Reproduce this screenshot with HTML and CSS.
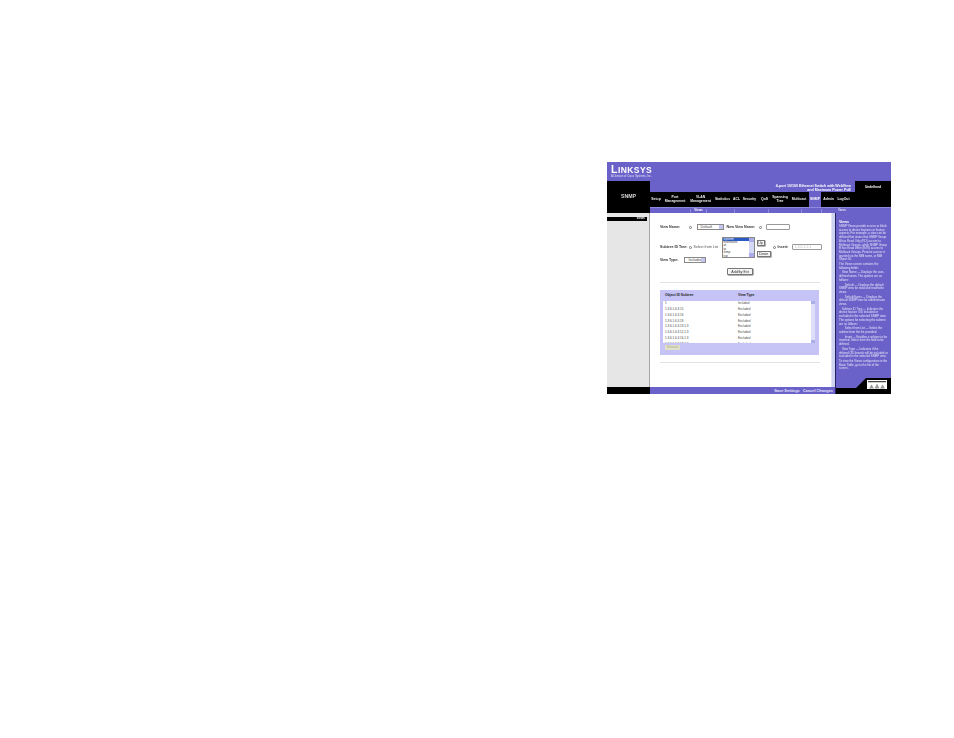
FILE: index.html
```html
<!DOCTYPE html>
<html lang="en">
<head>
<meta charset="utf-8">
<title>SNMP Views</title>
<link rel="stylesheet" href="styles.css">
</head>
<body>
<div class="frame">
  <div class="top">
    <div class="logo"><span class="logo-name">L<small>INKSYS</small></span><span class="logo-sub">A Division of Cisco Systems, Inc.</span></div>
  </div>
  <div class="head">
    <div class="brand">SNMP</div>
    <div class="title">4-port 10/100 Ethernet Switch with WebView<br>and Maximum Power PoE</div>
    <div class="status">Undefined</div>
    <nav class="nav">
      <span>Setup</span>
      <span>Port<br>Management</span>
      <span>VLAN<br>Management</span>
      <span>Statistics</span>
      <span>ACL</span>
      <span>Security</span>
      <span>QoS</span>
      <span>Spanning<br>Tree</span>
      <span>Multicast</span>
      <span class="on">SNMP</span>
      <span>Admin</span>
      <span>LogOut</span>
    </nav>
    <div class="subnav">
      <i></i><b>Views</b><i></i><i></i><i></i><i></i><i></i><em>Views</em>
    </div>
  </div>
  <div class="body">
    <aside class="side"><div class="side-item">Views</div></aside>
    <main class="main">
      <div class="scroll"></div>
      <div class="content">
        <div class="row-name">
          <label class="lbl">View Name:</label><span class="radio"></span>
          <span class="select w27">Default<i></i></span>
          <label class="lbl new">New View Name:</label><span class="radio"></span>
          <span class="input w24i"></span>
        </div>
        <div class="row-tree">
          <label class="lbl">Subtree ID Tree:</label><span class="radio"></span><span class="txt from">Select from List</span>
          <div class="list">
            <span class="sel">system</span><span>interfaces</span><span>at</span><span>ip</span><span>icmp</span><span>tcp</span><i></i>
          </div>
          <div class="updown"><span class="btn">Up</span><span class="btn">Down</span></div>
          <span class="radio r2"></span><label class="lbl ins">Insert:</label>
          <span class="input w29i">1.3.6.1.2.1</span>
        </div>
        <div class="row-type">
          <label class="lbl">View Type:</label>
          <span class="select w20">Included<i></i></span>
        </div>
        <div class="row-add"><span class="btn add">Add/by Ext</span></div>
        <hr class="rule">
        <section class="panel">
          <div class="thead"><b>Object ID Subtree</b><b>View Type</b></div>
          <div class="table">
            <div class="tr"><span>1</span><span>Included</span></div>
            <div class="tr"><span>1.3.6.1.6.3.15</span><span>Excluded</span></div>
            <div class="tr"><span>1.3.6.1.6.3.16</span><span>Excluded</span></div>
            <div class="tr"><span>1.3.6.1.6.3.18</span><span>Excluded</span></div>
            <div class="tr"><span>1.3.6.1.6.3.13.1.3</span><span>Excluded</span></div>
            <div class="tr"><span>1.3.6.1.6.3.12.1.3</span><span>Excluded</span></div>
            <div class="tr"><span>1.3.6.1.6.3.16.1.3</span><span>Excluded</span></div>
            <div class="tr"><span>1.3.6.1.6.3.18.1.3</span><span>Excluded</span></div>
            <div class="tscroll"></div>
          </div>
          <span class="remove">Remove</span>
        </section>
        <hr class="rule r-b">
      </div>
    </main>
    <aside class="help">
      <div class="help-text">
        <h4>Views</h4>
        <p>SNMP Views provide access or block access to device features or feature aspects. For example, a view can be defined that states that SNMP Group A has Read Only (RO) access to Multicast Groups, while SNMP Group B has Read Write (R/W) access to Multicast Groups. Feature access is granted via the MIB name, or MIB Object ID.</p>
        <p>The Views screen contains the following fields:</p>
        <p>&emsp;View Name — Displays the user-defined views. The options are as follows:</p>
        <p>&emsp;&emsp;Default — Displays the default SNMP view for read and read/write views.</p>
        <p>&emsp;&emsp;DefaultSuper — Displays the default SNMP view for administrator views.</p>
        <p>&emsp;Subtree ID Tree — Indicates the device feature OID included or excluded in the selected SNMP view. The options for selecting the subtree are as follows:</p>
        <p>&emsp;&emsp;Select from List — Select the subtree from the list provided.</p>
        <p>&emsp;&emsp;Insert — Enables a subtree to be inserted. Select from the field to be defined.</p>
        <p>&emsp;View Type — Indicates if the defined OID branch will be included or excluded in the selected SNMP view.</p>
        <p class="last">To view the Views configuration in the Basic Table, go to the list of the screen.</p>
      </div>
      <div class="cisco">
        <svg class="cisco-mark" viewBox="0 0 20 9" width="20" height="9" aria-hidden="true">
          <rect width="20" height="9" fill="#fff"/>
          <path d="M1 1h18v1.200H1z" fill="#444"/>
          <path d="M2 8.500 4.500 4.500 7 8.500zM7.500 8.500 10 3.500 12.500 8.500zM13 8.500 15.500 4.500 18 8.500z" fill="#9a9a9a"/>
        </svg>
      </div>
    </aside>
    <div class="foot-l"></div>
    <div class="foot"><span>Save Settings</span><span>Cancel Changes</span></div>
  </div>
</div>
</body>
</html>
```
FILE: styles.css
```css
* { box-sizing: border-box; }
html, body { margin: 0; padding: 0; background: #fff; }
body { width: 954px; height: 738px; padding: 162px 0 0 607px; font-family: "Liberation Sans", Arial, sans-serif; overflow: hidden; }
.frame { width: 284px; height: 232px; display: flex; flex-direction: column; font-size: 3.6px; line-height: 1.15; color: #222; filter: blur(.3px); }

.top { height: 19px; background: #6a62c8; padding: 3px 0 0 4px; }
.logo { display: flex; flex-direction: column; color: #fff; }
.logo-name { font-size: 10.500px; line-height: 9px; font-weight: 700; letter-spacing: .45px; }
.logo-name small { font-size: 8.500px; }
.logo-sub { font-size: 2.800px; line-height: 3px; color: #e2e0f8; }

.head { display: grid; grid-template-columns: 43px 205px 36px; grid-template-rows: 11px 15px 6px; }
.brand { grid-row: 1 / 4; background: #000; color: #d8d8d8; font-weight: 700; font-size: 5.200px; text-align: center; padding-top: 13px; }
.title { background: #6a62c8; color: #fff; font-weight: 700; font-size: 3.600px; line-height: 4.200px; text-align: right; padding: 2.500px 4px 0 0; white-space: nowrap; }
.status { grid-column: 3; grid-row: 1 / 3; background: #000; color: #fff; font-weight: 700; font-size: 3.300px; text-align: center; padding-top: 4.500px; }
.nav { background: #000; display: flex; align-items: center; color: #eee; font-weight: 700; font-size: 3.400px; text-align: center; line-height: 3.900px; }
.nav span { display: flex; align-items: center; justify-content: center; height: 100%; flex: none; }
.nav span:nth-child(1) { width: 12px; }
.nav span:nth-child(2) { width: 26px; }
.nav span:nth-child(3) { width: 25px; }
.nav span:nth-child(4) { width: 19px; }
.nav span:nth-child(5) { width: 9px; }
.nav span:nth-child(6) { width: 17px; }
.nav span:nth-child(7) { width: 13px; }
.nav span:nth-child(8) { width: 18px; }
.nav span:nth-child(9) { width: 20px; }
.nav span:nth-child(10) { width: 12px; }
.nav span:nth-child(11) { width: 15px; }
.nav span:nth-child(12) { width: 15px; }
.nav .on { background: #6a62c8; color: #fff; }
.subnav { grid-column: 2 / 4; background: #6a62c8; border-top: 1px solid #8f89dc; display: flex; align-items: center; color: #d9d7f7; font-size: 3px; padding-left: 40px; }
.subnav i { width: 1px; height: 4px; background: #8f89dc; flex: none; }
.subnav b { margin: 0 2px; width: 11px; flex: none; color: #fff; text-align: center; }
.subnav i:nth-child(4) { margin-left: 27px; }
.subnav i:nth-child(5) { margin-left: 33px; }
.subnav i:nth-child(6) { margin-left: 32px; }
.subnav i:nth-child(7) { margin-left: 19px; }
.subnav em { margin-left: 16px; font-style: normal; color: #fff; }

.body { display: grid; grid-template-columns: 43px 185px 56px; grid-template-rows: 174px 7px; }
.side { background: #e6e6e6; border-right: 1.500px solid #a4a4a4; padding-top: 4px; }
.side-item { background: #000; color: #fff; font-weight: 700; font-size: 3px; line-height: 3.500px; width: 40px; text-align: right; padding-right: 2px; }
.main { background: #fff; display: flex; flex-direction: row-reverse; }
.scroll { width: 4px; background: #cfd3f2; border-left: 1px solid #e3e5f7; flex: none; }
.content { flex: 1; padding: 0 0 0 10px; }

.lbl { font-weight: 700; color: #333; white-space: nowrap; }
.txt { color: #555; white-space: nowrap; }
.radio { width: 3px; height: 3px; border: .5px solid #777; border-radius: 50%; background: #fff; flex: none; }
.select { height: 5.500px; border: .5px solid #888; background: #fff; position: relative; padding-left: 3px; line-height: 4.500px; color: #444; flex: none; }
.select i { position: absolute; right: 0; top: 0; bottom: 0; width: 4px; background: #c3c7f0; }
.w27 { width: 27px; }
.w20 { width: 22px; }
.input { height: 6px; border: .5px solid #999; border-radius: 1px; background: #fff; color: #bbb; padding-left: 2px; line-height: 5px; flex: none; }
.w24i { width: 24px; }
.w29i { width: 30px; }

.row-name { display: flex; align-items: center; height: 6px; margin-top: 11px; }
.row-name .radio { margin: 0 5px 0 8.500px; }
.row-name .new { margin-left: 3px; }
.row-name .new + .radio { margin: 0 4px 0 4px; }
.row-tree { display: flex; align-items: center; height: 22px; margin-top: 6px; }
.from { margin-left: 2px; width: 24px; flex: none; }
.row-tree .radio { margin-left: 1px; }
.list { width: 33px; height: 21px; margin-left: 4px; border: .5px solid #888; background: #fff; position: relative; display: flex; flex-direction: column; color: #333; flex: none; font-size: 3.200px; line-height: 3.400px; overflow: hidden; }
.list span { padding-left: 1px; }
.list .sel { background: #2a5bc4; color: #fff; }
.list i { position: absolute; top: 0; right: 0; bottom: 0; width: 5px; background: #d5d8f5; border-top: 4px solid #a9aeea; border-bottom: 4px solid #a9aeea; }
.updown { width: 16px; height: 17px; margin: 3px 0 0 2px; display: flex; flex-direction: column; justify-content: space-between; align-items: flex-start; flex: none; }
.btn { height: 6px; border: .5px solid #777; background: #f4f4f4; padding: 0; line-height: 5px; color: #333; box-shadow: .5px .5px 0 #666; text-align: center; }
.updown .btn:first-child { width: 8px; }
.updown .btn:last-child { width: 14px; }
.row-tree .r2 { margin-left: 0; }
.ins { margin: 0 3px 0 2px; }
.row-type { display: flex; align-items: center; height: 6px; margin-top: -1px; }
.row-type .select { margin-left: 6px; }
.row-add { display: flex; justify-content: center; margin-top: 5px; width: 160px; height: 8px; }
.add { width: 26px; height: 7px; line-height: 6px; white-space: nowrap; border-radius: 1px; }

.rule { border: 0; height: 1px; background: #e3e3e3; margin: 6px 0 0; width: 160px; }
.r-b { margin-top: 7px; }
.panel { height: 65px; width: 159px; margin-top: 7px; background: #c6c3f6; padding: 0 3px; position: relative; }
.thead { height: 11px; display: grid; grid-template-columns: 73px 1fr; align-items: center; padding: 1px 0 0 2px; font-size: 3.400px; color: #222; white-space: nowrap; }
.table { height: 42px; width: 152px; background: #fff; position: relative; overflow: hidden; font-size: 3px; }
.tr { height: 5.800px; display: grid; grid-template-columns: 73px 1fr; align-items: center; padding-left: 2px; color: #444; }
.tscroll { position: absolute; top: 0; right: 0; bottom: 0; width: 4.500px; background: #dcdff7; border-top: 3px solid #a9aeea; border-bottom: 3px solid #a9aeea; }
.remove { position: absolute; left: 5px; top: 54.500px; width: 15px; height: 5px; background: #dfe0c8; color: #b0af85; text-align: center; line-height: 5px; font-size: 3px; }

.help { grid-column: 3; grid-row: 1 / 3; background: #6a62c8; border-left: 1px solid #232060; color: #e4e3fa; display: flex; flex-direction: column; justify-content: space-between; overflow: hidden; }
.help-text { padding: 7px 3px 0 3px; font-size: 2.900px; line-height: 3.700px; }
.help-text h4 { margin: 0 0 1px; font-size: 3.600px; line-height: 4px; color: #fff; }
.help-text p { margin: 0 0 1px; }
.help-text .last { margin: 0; }
.cisco { height: 16px; background: #000; display: flex; justify-content: flex-end; padding: 2px 4px 0 0; clip-path: polygon(20px 10px, 30px 0, 100% 0, 100% 100%, 0 100%, 0 10px); flex: none; }
.cisco-mark { display: block; }

.foot-l { background: #000; }
.foot { background: #6a62c8; color: #e6e5fb; font-weight: 700; font-size: 3.900px; line-height: 5px; display: flex; justify-content: flex-end; align-items: center; gap: 3px; padding-right: 2px; }
```
